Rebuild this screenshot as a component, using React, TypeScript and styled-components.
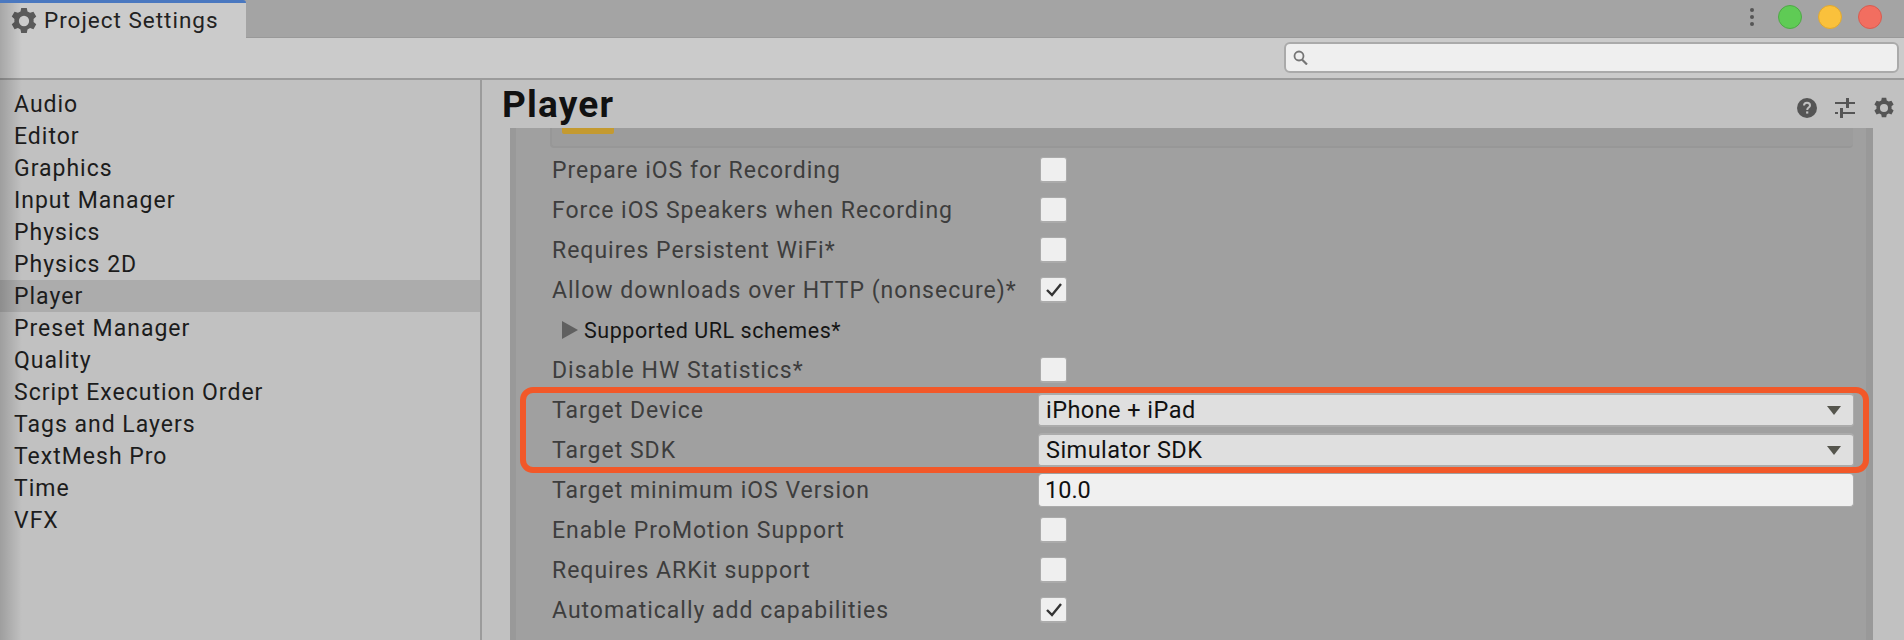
import React from "react";
import styled, { createGlobalStyle } from "styled-components";

const GlobalStyle = createGlobalStyle`
  html, body {
    margin: 0;
    padding: 0;
    height: 640px;
    overflow: hidden;
    background: #c1c1c1;
  }
`;

const Window = styled.div`
  position: relative;
  width: 1904px;
  height: 640px;
  overflow: hidden;
  font-family: Roboto, sans-serif;
  display: flex;
  flex-direction: column;
  background: #c1c1c1;
`;

const EdgeShadow = styled.div`
  position: absolute;
  left: 0;
  top: 3px;
  bottom: 0;
  width: 22px;
  background: linear-gradient(to right, rgba(0, 0, 0, 0.18), rgba(0, 0, 0, 0));
  pointer-events: none;
`;

const TabBar = styled.div`
  height: 37px;
  flex: none;
  background: #a4a4a4;
  border-bottom: 1px solid #999999;
  display: flex;
  align-items: flex-start;
  justify-content: space-between;
`;

const Tab = styled.div`
  width: 236px;
  height: 35px;
  border-top: 3px solid #4a78c0;
  border-top-right-radius: 3px;
  background: #cbcbcb;
  display: flex;
  align-items: center;
  gap: 6px;
  padding-left: 10px;
  font-size: 22.5px;
  letter-spacing: 1px;
  color: #222222;
`;

const TabTitle = styled.span`
  margin-top: -2px;
`;

const WindowButtons = styled.div`
  display: flex;
  align-items: center;
  height: 33px;
  margin-right: 22px;
`;

const MoreDots = styled.div`
  display: flex;
  flex-direction: column;
  gap: 3px;
  margin-right: 8px;
`;

const Dot = styled.span`
  width: 4px;
  height: 4px;
  border-radius: 50%;
  background: #555555;
`;

const Light = styled.span<{ $fill: string; $edge: string }>`
  width: 24px;
  height: 24px;
  box-sizing: border-box;
  border-radius: 50%;
  background: ${(p) => p.$fill};
  border: 1px solid ${(p) => p.$edge};
  margin-left: 16px;
`;

const Toolbar = styled.div`
  height: 36px;
  flex: none;
  background: #cbcbcb;
  border-bottom: 2px solid #9b9b9b;
  display: flex;
  align-items: flex-start;
  justify-content: flex-end;
  padding: 4px 5px 0 0;
`;

const Search = styled.div`
  width: 615px;
  height: 31px;
  box-sizing: border-box;
  background: #efefef;
  border: 2px solid #aaaaaa;
  border-radius: 6px;
  display: flex;
  align-items: center;
  padding-left: 7px;
`;

const Body = styled.div`
  flex: 1;
  display: flex;
  min-height: 0;
`;

const Sidebar = styled.nav`
  width: 480px;
  flex: none;
  border-right: 2px solid #9b9b9b;
  padding-top: 8px;
  background: #c1c1c1;
`;

const SideItem = styled.div<{ $active?: boolean }>`
  height: 32px;
  line-height: 34px;
  padding-left: 14px;
  font-size: 23px;
  letter-spacing: 1px;
  color: #1c1c1c;
  background: ${(p) => (p.$active ? "#acacac" : "transparent")};
`;

const Main = styled.main`
  flex: 1;
  min-width: 0;
  display: flex;
  flex-direction: column;
`;

const Header = styled.header`
  height: 48px;
  flex: none;
  display: flex;
  align-items: center;
  justify-content: space-between;
  padding: 0 9px 0 20px;
`;

const Title = styled.h1`
  margin: 0;
  padding-top: 2px;
  font-size: 37px;
  line-height: 48px;
  font-weight: 700;
  letter-spacing: 1.2px;
  color: #111111;
`;

const HeaderIcons = styled.div`
  display: flex;
  align-items: center;
  gap: 18px;
  margin-top: 8px;
`;

const Panel = styled.section`
  flex: 1;
  margin: 0 31px 0 28px;
  background: #a0a0a0;
  border: solid #999999;
  border-width: 0 7px 0 6px;
  padding-left: 36px;
  padding-right: 12px;
`;

const FoldedBox = styled.div`
  height: 20px;
  margin: 0 1px 2px -2px;
  background: #9c9c9c;
  border-bottom: 2px solid #979797;
  border-left: 2px solid #979797;
  border-bottom-left-radius: 4px;
  border-bottom-right-radius: 4px;
  box-sizing: border-box;
  padding-left: 10px;
`;

const GoldBar = styled.div`
  width: 52px;
  height: 6px;
  background: #c49a30;
  border-radius: 0 0 2px 2px;
`;

const Row = styled.div`
  height: 40px;
  display: grid;
  grid-template-columns: 486px 1fr;
  align-items: center;
`;

const Label = styled.label`
  font-size: 23px;
  letter-spacing: 1px;
  color: #3d3d3d;
  white-space: nowrap;
`;

const FoldRow = styled.div`
  height: 40px;
  display: flex;
  align-items: center;
  padding-left: 10px;
  gap: 6px;
  font-size: 21.5px;
  letter-spacing: 0.55px;
  color: #151515;
`;

const FoldArrow = styled.span`
  width: 0;
  height: 0;
  border-style: solid;
  border-width: 9px 0 9px 16px;
  border-color: transparent transparent transparent #606060;
`;

const Checkbox = styled.span`
  width: 27px;
  height: 26px;
  margin-left: 2px;
  box-sizing: border-box;
  background: #efefef;
  border: 1px solid #ababab;
  border-bottom-width: 2px;
  border-radius: 3px;
  display: flex;
  align-items: center;
  justify-content: center;
`;

const Select = styled.div`
  height: 34px;
  box-sizing: border-box;
  background: #dfdfdf;
  border-radius: 4px;
  border: 1px solid #ababab;
  border-top-width: 2px;
  border-bottom-width: 2px;
  display: flex;
  align-items: center;
  justify-content: space-between;
  padding: 0 12px 0 7px;
  font-size: 23.5px;
  letter-spacing: 0.45px;
  color: #111111;
`;

const SelectArrow = styled.span`
  width: 0;
  height: 0;
  border-style: solid;
  border-width: 9px 7.5px 0 7.5px;
  border-color: #55554d transparent transparent transparent;
`;

const NumberField = styled.div`
  height: 33px;
  box-sizing: border-box;
  background: #f0f0f0;
  border: 1px solid #ababab;
  border-top: none;
  border-radius: 4px;
  display: flex;
  align-items: center;
  padding-left: 6px;
  font-size: 23.5px;
  color: #111111;
`;

const Highlighted = styled.div`
  position: relative;
`;

const Outline = styled.div`
  position: absolute;
  left: -32px;
  right: -15px;
  top: -3px;
  bottom: -3px;
  border: 6px solid #f25829;
  border-radius: 13px;
  pointer-events: none;
`;

const GearIcon = ({ size, color }: { size: number; color: string }) => (
  <svg width={size} height={size} viewBox="0 0 24 24" fill={color}>
    <path
      fillRule="evenodd"
      d="M9.6 0.8h4.8l0.6 3 2.2 1.2 2.9-1 2.4 4.2-2.3 2c0.1 0.8 0.1 1.7 0 2.6l2.3 2-2.4 4.2-2.9-1-2.2 1.2-0.6 3H9.6l-0.6-3-2.2-1.2-2.9 1-2.4-4.2 2.3-2c-0.1-0.9-0.1-1.8 0-2.6l-2.3-2 2.4-4.2 2.9 1 2.2-1.2zM12 7.6a4.4 4.4 0 1 0 0 8.8 4.4 4.4 0 0 0 0-8.8z"
    />
  </svg>
);

const HelpIcon = () => (
  <svg width="20" height="20" viewBox="0 0 20 20">
    <circle cx="10" cy="10" r="10" fill="#555555" />
    <path
      d="M7 7.6c0-1.7 1.3-2.8 3-2.8s3 1 3 2.6c0 2.2-2.8 2.2-2.8 4.6"
      fill="none"
      stroke="#c1c1c1"
      strokeWidth="2"
    />
    <rect x="9.1" y="13.4" width="2.2" height="2.2" fill="#c1c1c1" />
  </svg>
);

const TuneIcon = () => (
  <svg width="20" height="20" viewBox="0 0 20 20" fill="#555555">
    <rect x="0" y="4" width="11" height="2" />
    <rect x="11" y="0" width="3" height="10" />
    <rect x="14" y="4" width="6" height="2" />
    <rect x="0" y="14" width="3" height="2" />
    <rect x="5" y="10" width="3" height="10" />
    <rect x="8" y="14" width="12" height="2" />
  </svg>
);

const SearchIcon = () => (
  <svg width="15" height="15" viewBox="0 0 15 15" fill="none" stroke="#757575">
    <circle cx="6" cy="6" r="4.5" strokeWidth="1.8" />
    <path d="M9 9.5l5 5" strokeWidth="2.2" />
  </svg>
);

const CheckMark = () => (
  <svg width="16" height="14" viewBox="0 0 16 14" fill="none" stroke="#333333" strokeWidth="2.4">
    <path d="M1 7l5 5 9-11" />
  </svg>
);

const sections = [
  "Audio",
  "Editor",
  "Graphics",
  "Input Manager",
  "Physics",
  "Physics 2D",
  "Player",
  "Preset Manager",
  "Quality",
  "Script Execution Order",
  "Tags and Layers",
  "TextMesh Pro",
  "Time",
  "VFX",
];

const CheckRow = ({ label, checked }: { label: string; checked?: boolean }) => (
  <Row>
    <Label>{label}</Label>
    <Checkbox>{checked && <CheckMark />}</Checkbox>
  </Row>
);

const SelectRow = ({ label, value }: { label: string; value: string }) => (
  <Row>
    <Label>{label}</Label>
    <Select>
      {value}
      <SelectArrow />
    </Select>
  </Row>
);

const App = () => (
  <Window>
    <GlobalStyle />
    <TabBar>
      <Tab>
        <GearIcon size={28} color="#5a5a5a" />
        <TabTitle>Project Settings</TabTitle>
      </Tab>
      <WindowButtons>
        <MoreDots>
          <Dot />
          <Dot />
          <Dot />
        </MoreDots>
        <Light $fill="#5fcb55" $edge="#4fa847" />
        <Light $fill="#fac13c" $edge="#e0a830" />
        <Light $fill="#f26e60" $edge="#d85c50" />
      </WindowButtons>
    </TabBar>
    <Toolbar>
      <Search>
        <SearchIcon />
      </Search>
    </Toolbar>
    <Body>
      <Sidebar>
        {sections.map((name) => (
          <SideItem key={name} $active={name === "Player"}>
            {name}
          </SideItem>
        ))}
      </Sidebar>
      <Main>
        <Header>
          <Title>Player</Title>
          <HeaderIcons>
            <HelpIcon />
            <TuneIcon />
            <GearIcon size={22} color="#555555" />
          </HeaderIcons>
        </Header>
        <Panel>
          <FoldedBox>
            <GoldBar />
          </FoldedBox>
          <CheckRow label="Prepare iOS for Recording" />
          <CheckRow label="Force iOS Speakers when Recording" />
          <CheckRow label="Requires Persistent WiFi*" />
          <CheckRow label="Allow downloads over HTTP (nonsecure)*" checked />
          <FoldRow>
            <FoldArrow />
            Supported URL schemes*
          </FoldRow>
          <CheckRow label="Disable HW Statistics*" />
          <Highlighted>
            <SelectRow label="Target Device" value="iPhone + iPad" />
            <SelectRow label="Target SDK" value="Simulator SDK" />
            <Outline />
          </Highlighted>
          <Row>
            <Label>Target minimum iOS Version</Label>
            <NumberField>10.0</NumberField>
          </Row>
          <CheckRow label="Enable ProMotion Support" />
          <CheckRow label="Requires ARKit support" />
          <CheckRow label="Automatically add capabilities" checked />
        </Panel>
      </Main>
    </Body>
    <EdgeShadow />
  </Window>
);

export default App;
